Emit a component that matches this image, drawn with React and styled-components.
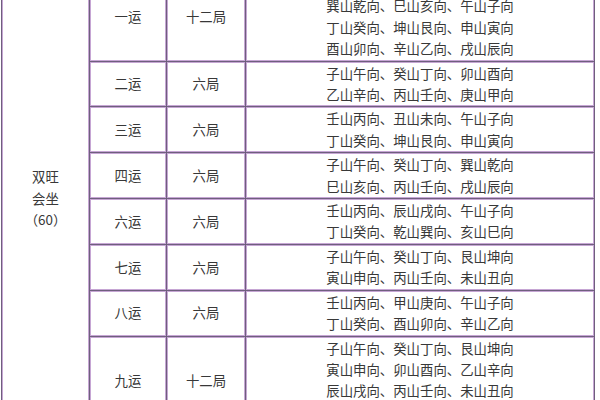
import React from "react";
import styled, { createGlobalStyle } from "styled-components";

const Global = createGlobalStyle`
  html, body {
    margin: 0;
    padding: 0;
    background: #ffffff;
    overflow: hidden;
  }
  body {
    font-family: "Noto Sans CJK SC", "Noto Sans", sans-serif;
  }
`;

const Page = styled.div`
  width: 600px;
  height: 400px;
  overflow: hidden;
  background: #ffffff;
`;

const Table = styled.div`
  display: grid;
  grid-template-columns: 87px 76px 78px 348px;
  gap: 1px;
  padding: 1px;
  background: #6f5f7e;
  margin: -28px 0 0 1px;
  width: max-content;
`;

const Cell = styled.div`
  box-sizing: border-box;
  border: 1px solid #c6a6d4;
  background: #ffffff;
  display: flex;
  flex-direction: column;
  align-items: center;
  justify-content: center;
  font-size: 13.4px;
  line-height: 21.4px;
  color: #383838;
  white-space: nowrap;
  grid-column: ${(p) => p.$col};
  grid-row: ${(p) => p.$row};
`;

const Line = styled.span`
  display: block;
`;

const rows = [
  {
    yun: "一运",
    ju: "十二局",
    lines: [
      "壬山丙向、子山午向、癸山丁向",
      "巽山乾向、巳山亥向、午山子向",
      "丁山癸向、坤山艮向、申山寅向",
      "酉山卯向、辛山乙向、戌山辰向",
    ],
  },
  {
    yun: "二运",
    ju: "六局",
    lines: ["子山午向、癸山丁向、卯山酉向", "乙山辛向、丙山壬向、庚山甲向"],
  },
  {
    yun: "三运",
    ju: "六局",
    lines: ["壬山丙向、丑山未向、午山子向", "丁山癸向、坤山艮向、申山寅向"],
  },
  {
    yun: "四运",
    ju: "六局",
    lines: ["子山午向、癸山丁向、巽山乾向", "巳山亥向、丙山壬向、戌山辰向"],
  },
  {
    yun: "六运",
    ju: "六局",
    lines: ["壬山丙向、辰山戌向、午山子向", "丁山癸向、乾山巽向、亥山巳向"],
  },
  {
    yun: "七运",
    ju: "六局",
    lines: ["子山午向、癸山丁向、艮山坤向", "寅山申向、丙山壬向、未山丑向"],
  },
  {
    yun: "八运",
    ju: "六局",
    lines: ["壬山丙向、甲山庚向、午山子向", "丁山癸向、酉山卯向、辛山乙向"],
  },
  {
    yun: "九运",
    ju: "十二局",
    lines: [
      "子山午向、癸山丁向、艮山坤向",
      "寅山申向、卯山酉向、乙山辛向",
      "辰山戌向、丙山壬向、未山丑向",
      "丁山癸向、午山子向、坤山艮向",
    ],
  },
];

export default function App() {
  return (
    <Page>
      <Global />
      <Table>
        <Cell $col="1" $row={`1 / span ${rows.length}`}>
          <Line>双旺</Line>
          <Line>会坐</Line>
          <Line>（60）</Line>
        </Cell>
        {rows.map((r, i) => (
          <React.Fragment key={r.yun}>
            <Cell $col="2" $row={`${i + 1}`}>
              {r.yun}
            </Cell>
            <Cell $col="3" $row={`${i + 1}`}>
              {r.ju}
            </Cell>
            <Cell $col="4" $row={`${i + 1}`}>
              {r.lines.map((l) => (
                <Line key={l}>{l}</Line>
              ))}
            </Cell>
          </React.Fragment>
        ))}
      </Table>
    </Page>
  );
}
